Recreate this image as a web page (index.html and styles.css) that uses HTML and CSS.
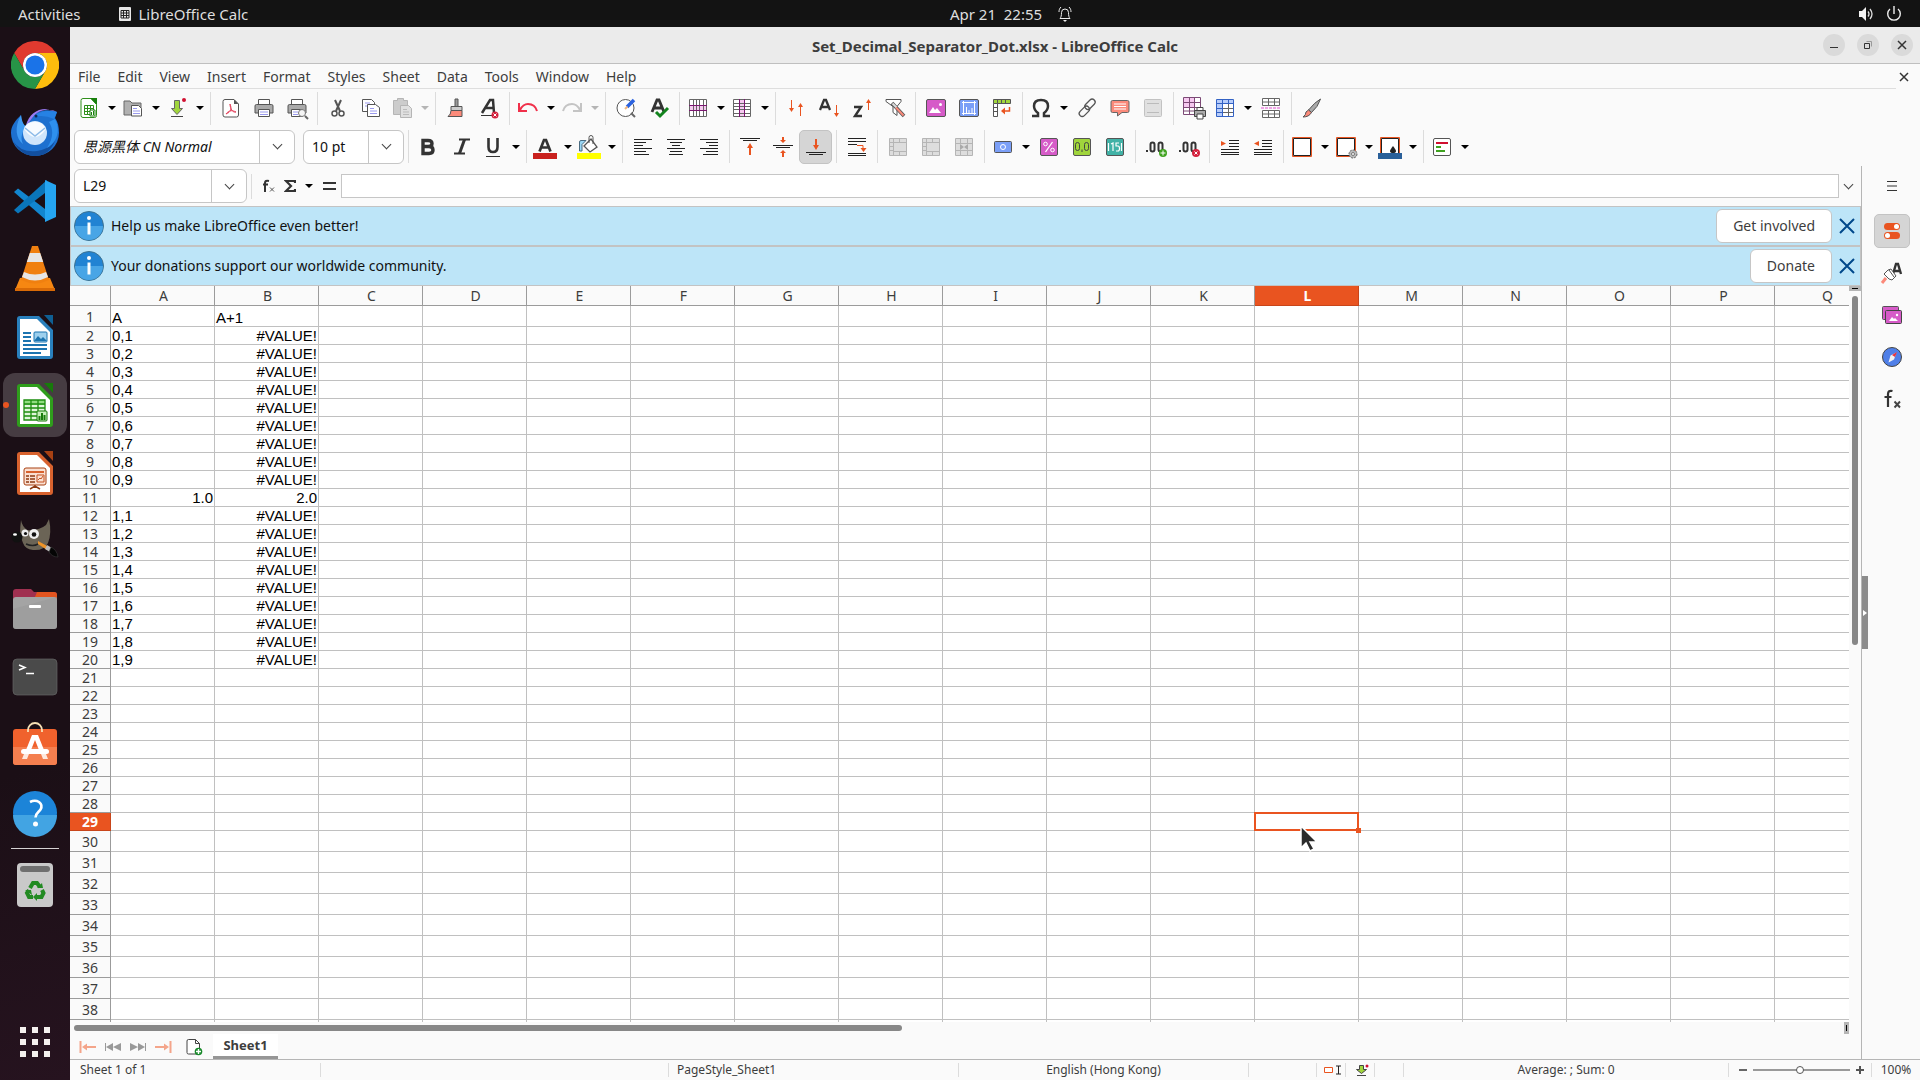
FILE: index.html
```html
<!DOCTYPE html>
<html lang="en">
<head>
  <meta charset="utf-8">
  <title>Set_Decimal_Separator_Dot.xlsx - LibreOffice Calc</title>
  <link rel="stylesheet" href="styles.css">
</head>
<body>
  <header class="topbar">
    <div class="topbar-left">
      <button type="button">Activities</button>
      <button type="button" class="app-menu">
        <svg width="12" height="14" viewBox="0 0 12 14"><rect width="12" height="14" rx="1" fill="#e8e8e8"/><path d="M2 3.500h8v7.500h-8zM2 6h8M2 8.500h8M4.500 3.500v7.500M7.500 3.500v7.500" fill="none" stroke="#222"/></svg>
        LibreOffice Calc
      </button>
    </div>
    <div class="clock">
      <span>Apr 21&nbsp; 22:55</span>
      <svg width="14" height="16" viewBox="0 0 14 16" fill="none" stroke="#eee"><path d="M2 12.500c1-1 1.500-3 1.500-6a3.500 3.500 0 0 1 7 0c0 3 .5 5 1.500 6z M1 6c0-2 .5-3.500 2-5M13 6c0-2-.5-3.500-2-5"/><path d="M5 14h4l-2 2z" fill="#eee" stroke="none"/></svg>
    </div>
    <div class="topbar-right">
      <svg width="16" height="16" viewBox="0 0 16 16"><path d="M1 5h3l4-4v14l-4-4H1z" fill="#f2f2f2"/><path d="M10 5.500q2 2.500 0 5M12 3q4 5 0 10" fill="none" stroke="#ddd" stroke-width="1.300"/></svg>
      <svg width="16" height="16" viewBox="0 0 16 16" fill="none" stroke="#eee" stroke-width="1.400"><path d="M4 3a6.300 6.300 0 1 0 8 0M8 0v8"/></svg>
    </div>
  </header>

  <div class="desktop">
    <nav class="dock" aria-label="Dock">
      <!-- Chrome -->
      <button type="button" aria-label="Google Chrome"><svg viewBox="0 0 48 48"><path d="M24 12h20.800A24 24 0 0 0 3.200 12l10.400 18A12 12 0 0 1 24 12z" fill="#e03a2f"/><path d="M44.800 12A24 24 0 0 1 24 48l10.400-18A12 12 0 0 0 24 12z" fill="#fdbd0d"/><path d="M3.200 12A24 24 0 0 0 24 48l10.400-18a12 12 0 0 1-20.800 0z" fill="#279447"/><circle cx="24" cy="24" r="12" fill="#fff"/><circle cx="24" cy="24" r="9.500" fill="#1a73e8"/></svg></button>
      <!-- Thunderbird -->
      <button type="button" aria-label="Thunderbird"><svg viewBox="0 0 48 48"><path d="M10 6c-6 6-10 11-10 18a24 23 0 0 0 48 0c0-6-1-11-4-15l2-6c-7-3-20-3-25 6-3 4-5 7-7 8-3-3-4-6-4-11z" fill="#1d70cf"/><path d="M2 32q8 12 24 10 12-2 18-10-6 15-20 15T2 32z" fill="#124f9f"/><path d="M10 6c1 6 2 9 5 12-4 5-6 11-3 17C5 30 3 18 10 6z" fill="#3f9cf3"/><path d="M46 3C39-1 28 0 22 8c-3 4-5 7-7 8 3-10 10-16 20-16z" fill="#9a7cf4"/><path d="M22 8c6-6 16-7 24-5l-3 7q-10-5-21-2z" fill="#2682e4"/><path d="M44 10c6 11 2 23-8 29 6-9 7-18 2-26z" fill="#2e90ee"/><circle cx="25" cy="7" r="1.500" fill="#10284f"/><circle cx="24" cy="24" r="12" fill="#cfe5fb"/><path d="M13 20q11 16 22 0a12 12 0 0 0-22 0z" fill="#f7fbff"/><path d="M14 19l10 8 10-8" fill="none" stroke="#8dbbe8" stroke-width="1.500"/></svg></button>
      <!-- VS Code -->
      <button type="button" aria-label="Visual Studio Code"><svg viewBox="0 0 48 48"><path d="M3 15l4-3.500 29 22v10.500z" fill="#1286cf"/><path d="M3 33l4 3.500 29-22V3z" fill="#0a76bb"/><path d="M34 3l11 5v32l-11 5V3z" fill="#25a5f1"/></svg></button>
      <!-- VLC -->
      <button type="button" aria-label="VLC"><svg viewBox="0 0 48 48"><path d="M9 33h30l5 12H4z" fill="#f68712"/><path d="M4 43h40v3H4z" fill="#d96a06"/><path d="M21 1h6l11 34q-14 7-28 0z" fill="#f08010"/><path d="M18.800 8h10.400l3 9H15.800zM13 27q11 5 22 0l2 5q-13 7-26 0z" fill="#e6e6e6"/></svg></button>
      <!-- Writer -->
      <button type="button" aria-label="LibreOffice Writer"><svg viewBox="0 0 48 48"><path d="M8 3h20l14 14v26q0 3-3 3H9q-3 0-3-3V6q0-3 3-3z" fill="#2980bd"/><path d="M33 2h9v10z" fill="#0f5f93"/><path d="M9 6h17l13 13v24H9z" fill="#fff"/><path d="M12 20h8M12 24h8M12 28h8M12 32h24M12 36h24M12 40h18" stroke="#1c74b0" stroke-width="2"/><rect x="23" y="19" width="13" height="10" rx="1" fill="#9dd0ee" stroke="#1c74b0"/><path d="M23 28l4-5 3 3 2-2 4 4z" fill="#1c74b0"/></svg></button>
      <!-- Calc -->
      <button type="button" class="active" aria-label="LibreOffice Calc"><svg viewBox="0 0 48 48"><path d="M8 3h20l14 14v26q0 3-3 3H9q-3 0-3-3V6q0-3 3-3z" fill="#2f9e1c"/><path d="M33 2h9v10z" fill="#177a0b"/><path d="M9 6h17l13 13v24H9z" fill="#fff"/><path d="M13 19h21v20H13z" fill="#e0f5db"/><path d="M13 19h21v5H13z" fill="#90dc80"/><path d="M13 19h21v20H13zM13 23h21M13 27h21M13 31h21M13 35h21M20 19v20M27 19v20" fill="none" stroke="#1d8d0f" stroke-width="1.300"/><rect x="26" y="30" width="10" height="10" rx="1" fill="#c5eeb9" stroke="#177a0b"/><path d="M28.500 39v-4M31 39v-7M33.500 39v-5" stroke="#177a0b" stroke-width="2"/></svg></button>
      <!-- Impress -->
      <button type="button" aria-label="LibreOffice Impress"><svg viewBox="0 0 48 48"><path d="M8 3h20l14 14v26q0 3-3 3H9q-3 0-3-3V6q0-3 3-3z" fill="#d8622e"/><path d="M33 2h9v10z" fill="#a84113"/><path d="M9 6h17l13 13v24H9z" fill="#fff"/><rect x="13" y="19" width="22" height="17" rx="2" fill="#fae0d2" stroke="#a84113"/><path d="M15 23h18" stroke="#d8622e" stroke-width="2"/><path d="M15 27h3M15 30h3M15 33h3M19 27h5M19 30h5M19 33h5" stroke="#8e3a12" stroke-width="1.500"/><path d="M26 26h7v7h-7zM27 31l2-2 1 1 2-3" fill="none" stroke="#c55322"/><path d="M24 36v3M19 40l5-3 5 3" fill="none" stroke="#8e3a12" stroke-width="1.500"/></svg></button>
      <!-- GIMP -->
      <button type="button" aria-label="GIMP"><svg viewBox="0 0 48 48"><path d="M10 3q1 6 6 10 12 1 19-5l3-6q3 14-1 24-4 8-15 7-8-1-10-7l-3-8q0-8 1-15z" fill="#6b6456"/><circle cx="6" cy="20" r="5.500" fill="#111"/><ellipse cx="4" cy="17.500" rx="2" ry="1.300" fill="#fff"/><circle cx="14" cy="16" r="3.500" fill="#eee"/><circle cx="23" cy="17" r="5" fill="#eee"/><circle cx="14.500" cy="16.500" r="1.600" fill="#111"/><circle cx="23" cy="17.500" r="2.300" fill="#111"/><path d="M15 27q7 3 12 0" fill="none" stroke="#222" stroke-width="1.500"/><path d="M27 24l11 6-2 3-9-6z" fill="#ef9428"/><path d="M36 28l5 3-2 4-5-3z" fill="#bbb"/><path d="M40 30q6 3 7 10-6 0-9-5z" fill="#050505" stroke="#444" stroke-width=".5"/></svg></button>
      <!-- Files -->
      <button type="button" aria-label="Files"><svg viewBox="0 0 48 48"><path d="M2 13V7q0-3 3-3h15l3 3h20q3 0 3 3v7H2z" fill="#a03050"/><path d="M26 7h17q3 0 3 3v7H22z" fill="#e2541f"/><rect x="2" y="12" width="44" height="32" rx="3" fill="#a4a4a4"/><path d="M2 24L46 12v29q0 3-3 3H5q-3 0-3-3z" fill="#989898" opacity=".5"/><rect x="18" y="20" width="12" height="3" rx="1" fill="#fff"/></svg></button>
      <!-- Terminal -->
      <button type="button" aria-label="Terminal"><svg viewBox="0 0 48 48"><rect x="2" y="6" width="44" height="36" rx="4" fill="#4a4a4a" stroke="#666" stroke-width=".7"/><path d="M8 12l6 2.500-6 2.500M15 20.500h8" fill="none" stroke="#fff" stroke-width="1.500"/></svg></button>
      <!-- Software -->
      <button type="button" aria-label="Ubuntu Software"><svg viewBox="0 0 48 48"><rect x="2" y="8" width="44" height="36" rx="3" fill="#f0622d"/><path d="M2 26h44v15q0 3-3 3H5q-3 0-3-3z" fill="#f47f4f"/><path d="M17 11V9a7 7 0 0 1 14 0v2" fill="none" stroke="#f7e0b5" stroke-width="1.800"/><path d="M21 14h6l6 15h-5l-4-10-4 10h-5z" fill="#fff"/><rect x="10" y="28" width="28" height="5" rx="2.500" fill="#fff"/><path d="M13 33h5l-2 5h-5zM30 33h5l2 5h-5z" fill="#fde9df"/></svg></button>
      <!-- Help -->
      <button type="button" aria-label="Help"><svg viewBox="0 0 48 48"><circle cx="24" cy="24" r="22" fill="#1c84d8"/><path d="M2 26a22 22 0 0 0 44 0z" fill="#42a4e3"/><path d="M19 13q5-2.500 9 0 4 3 1.500 7.500c-2 3-5 3.500-5 8" fill="none" stroke="#fff" stroke-width="2.600"/><circle cx="24.500" cy="35" r="2.500" fill="#fff"/></svg></button>
      <hr>
      <!-- Trash -->
      <button type="button" aria-label="Trash"><svg viewBox="0 0 48 48"><rect x="6" y="2" width="36" height="44" rx="4" fill="#c9c9c9"/><rect x="9" y="5" width="30" height="6" rx="3" fill="#6f6f6f"/><g fill="none" stroke="#228a22" stroke-width="4"><path d="M19 27l3-5h4l3 4M31 29l1.500 3-2 4H26M22 36h-4l-2-4 2-3"/></g><path d="M26 27h6l-1-5zM26 32v8l-4-4zM14 29h6l1 5z" fill="#228a22"/></svg></button>
      <button type="button" class="apps" aria-label="Show Applications"><svg viewBox="0 0 48 48" fill="#f4f1ee"><path d="M9 9h6v6H9zM21 9h6v6h-6zM33 9h6v6h-6zM9 21h6v6H9zM21 21h6v6h-6zM33 21h6v6h-6zM9 33h6v6H9zM21 33h6v6h-6zM33 33h6v6h-6z"/></svg></button>
    </nav>

    <main class="window">
      <div class="titlebar">
        <h1>Set_Decimal_Separator_Dot.xlsx - LibreOffice Calc</h1>
        <div class="window-buttons">
          <button type="button" aria-label="Minimize"><svg viewBox="0 0 22 22"><path d="M7 13.500h8"/></svg></button>
          <button type="button" aria-label="Restore"><svg viewBox="0 0 22 22"><path d="M7.500 9.500h5v5h-5z"/><path d="M9.500 7.500h5v5" stroke="#999"/></svg></button>
          <button type="button" aria-label="Close"><svg viewBox="0 0 22 22"><path d="M7 7l8 8M15 7l-8 8" stroke-width="1.500"/></svg></button>
        </div>
      </div>

      <div class="menubar">
        <nav>
          <a href="#">File</a><a href="#">Edit</a><a href="#">View</a><a href="#">Insert</a><a href="#">Format</a><a href="#">Styles</a><a href="#">Sheet</a><a href="#">Data</a><a href="#">Tools</a><a href="#">Window</a><a href="#">Help</a>
        </nav>
        <button type="button" aria-label="Close document"><svg width="10" height="10" viewBox="0 0 10 10"><path d="M1 1l8 8M9 1l-8 8" stroke="#333" stroke-width="1.500"/></svg></button>
      </div>

      <!-- Standard toolbar -->
      <div class="toolbar">
        <button type="button" class="tool split" aria-label="New"><svg viewBox="0 0 24 24"><path d="M6 2.500h8l5.500 6v11q0 2-2 2H6q-2 0-2-2v-15q0-2 2-2z" fill="#fff" stroke="#2f8f1b"/><path d="M13 2h7v7z" fill="#18800c"/><path d="M7.500 9.500h9v9h-9zM7.500 12.500h9M7.500 15.500h9M10.500 9.500v9M13.500 9.500v9" fill="none" stroke="#2f8f1b"/><path d="M13 14h5v6h-5z" fill="#fff" stroke="#18800c"/><path d="M14.500 19v-3M16.500 19v-4" stroke="#18800c"/></svg><i class="caret"></i></button>
        <button type="button" class="tool split" aria-label="Open"><svg viewBox="0 0 24 24"><path d="M3 19V5h6l2 2h9v12z" fill="#b0b0b0" stroke="#666"/><path d="M10.500 9.500h7l3 3v7.500h-10z" fill="#fff" stroke="#555"/><path d="M12 12.500h4M12 15h7M12 17.500h7" stroke="#9a9aee"/></svg><i class="caret"></i></button>
        <button type="button" class="tool split" aria-label="Save"><svg viewBox="0 0 24 24"><path d="M9.500 4.500h5v8h3L12 18.500l-5.500-6h3z" fill="#a0d53c" stroke="#666"/><path d="M6 20.500h12" stroke="#444"/><circle cx="19" cy="4" r="2" fill="#d01030"/></svg><i class="caret"></i></button>
        <span class="sep"></span>
        <button type="button" class="tool" aria-label="Export as PDF"><svg viewBox="0 0 24 24"><path d="M6 3.500h9l4.500 4.500v11q0 2-2 2H6q-2 0-2-2v-13.500q0-2 2-2z" fill="#fff" stroke="#555"/><path d="M15 3.500l4.500 4.500H15z" fill="#555"/><path d="M11 8c2 5 1 8-4 10 3-4 6-4 10-2-3 1-6-3-6-8z" fill="none" stroke="#e4425c"/></svg></button>
        <button type="button" class="tool" aria-label="Print"><svg viewBox="0 0 24 24"><path d="M6.500 3.500h11V9h-11z" fill="#fff" stroke="#555"/><path d="M4.500 8.500h15q1.500 0 1.500 1.500v7H3v-7q0-1.500 1.500-1.500z" fill="#aaa" stroke="#555"/><path d="M6.500 13.500h11v7h-11z" fill="#fff" stroke="#555"/><path d="M8 16h8M8 18.500h8" stroke="#9a9aee"/></svg></button>
        <button type="button" class="tool" aria-label="Print Preview"><svg viewBox="0 0 24 24"><path d="M6.500 3.500h11V9h-11z" fill="#fff" stroke="#555"/><path d="M4.500 8.500h15q1.500 0 1.500 1.500v7H3v-7q0-1.500 1.500-1.500z" fill="#aaa" stroke="#555"/><path d="M6.500 13.500h11v7h-11z" fill="#fff" stroke="#555"/><path d="M8 16h5M8 18.500h5" stroke="#9a9aee"/><circle cx="17" cy="17" r="3.500" fill="#f5f5f5" stroke="#777"/><path d="M20 20l3 3" stroke="#666" stroke-width="2"/></svg></button>
        <span class="sep"></span>
        <button type="button" class="tool" aria-label="Cut"><svg viewBox="0 0 24 24"><path d="M9 4l5 11M15 4l-5 11" stroke="#555" stroke-width="2"/><circle cx="8.500" cy="17.500" r="2.500" fill="#fff" stroke="#555" stroke-width="1.500"/><circle cx="15.500" cy="17.500" r="2.500" fill="#fff" stroke="#555" stroke-width="1.500"/></svg></button>
        <button type="button" class="tool" aria-label="Copy"><svg viewBox="0 0 24 24"><path d="M3.500 3.500h9l3 3v9h-12z" fill="#fff" stroke="#555"/><path d="M6 7h5M6 10h3" stroke="#9a9aee"/><path d="M8.500 8.500h8l4 3v9h-12z" fill="#fff" stroke="#555"/><path d="M11 12.500h4M11 15h7M11 17.500h7" stroke="#9a9aee"/></svg></button>
        <button type="button" class="tool split off" aria-label="Paste" disabled><svg viewBox="0 0 24 24"><path d="M3.500 4.500h4v-2h6v2h4v14h-14z" fill="#ccc" stroke="#b5b5b5"/><path d="M10.500 9.500h8l3 3v9h-11z" fill="#e0e0e0" stroke="#b5b5b5"/><path d="M13 13.500h4M13 16h6M13 18.500h6" stroke="#bbb"/></svg><i class="caret"></i></button>
        <span class="sep"></span>
        <button type="button" class="tool" aria-label="Clone Formatting"><svg viewBox="0 0 24 24"><path d="M11 3h3v8h-3z" fill="#999" stroke="#555"/><path d="M7 10.500h11v4H7z" fill="#ccc" stroke="#555"/><path d="M7 14.500h11v6H4q3-2 3-6z" fill="#fb8a7a" stroke="#555"/></svg></button>
        <button type="button" class="tool" aria-label="Clear Formatting"><svg viewBox="0 0 24 24"><path d="M5 17L13 4h3l1 13M8 12h8" fill="none" stroke="#333" stroke-width="2.500"/><path d="M4 19.500h11" stroke="#333"/><circle cx="18" cy="19" r="3.500" fill="#d4213d"/><path d="M16.500 17.500l3 3M19.500 17.500l-3 3" stroke="#fff"/></svg></button>
        <span class="sep"></span>
        <button type="button" class="tool split" aria-label="Undo"><svg viewBox="0 0 24 24"><path d="M21 15q-2-7-9-7-5 0-8 6" fill="none" stroke="#f0304a" stroke-width="2"/><path d="M3 7v8h8" fill="none" stroke="#f0304a" stroke-width="2"/></svg><i class="caret"></i></button>
        <button type="button" class="tool split off" aria-label="Redo" disabled><svg viewBox="0 0 24 24"><path d="M3 15q2-7 9-7 5 0 8 6M21 7v8h-8" fill="none" stroke="#c4c4c4" stroke-width="2"/></svg><i class="caret"></i></button>
        <span class="sep"></span>
        <button type="button" class="tool" aria-label="Find and Replace"><svg viewBox="0 0 24 24"><circle cx="11.500" cy="12" r="8.500" fill="#fff" stroke="#555"/><path d="M17 17l4 4" stroke="#666" stroke-width="2"/><path d="M13 11l7-7" stroke="#2b62e0" stroke-width="3.500"/><path d="M11 13l2.500-2.500" stroke="#f3b780" stroke-width="2"/></svg></button>
        <button type="button" class="tool" aria-label="Spelling"><svg viewBox="0 0 24 24"><path d="M5 16L10 4h2l5 12M7 12h8" fill="none" stroke="#333" stroke-width="2.800"/><path d="M9 16l4 4 8-8" fill="none" stroke="#12831d" stroke-width="3"/></svg></button>
        <span class="sep"></span>
        <button type="button" class="tool split" aria-label="Row"><svg viewBox="0 0 24 24"><path d="M3.500 3.500h17v17h-17z" fill="#fff"/><path d="M3 9h18v6H3z" fill="#f6c9f0"/><path d="M3.500 3.500h17v17h-17zM7.500 3v18M10.500 3v18M13.500 3v18M17.500 3v18" fill="none" stroke="#666"/><path d="M3 9.500h18M3 14.500h18" stroke="#7b1670"/></svg><i class="caret"></i></button>
        <button type="button" class="tool split" aria-label="Column"><svg viewBox="0 0 24 24"><path d="M3.500 3.500h17v17h-17z" fill="#fff"/><path d="M9 3h6v18H9z" fill="#f6c9f0"/><path d="M3.500 3.500h17v17h-17zM3 7.500h18M3 10.500h18M3 13.500h18M3 17.500h18" fill="none" stroke="#666"/><path d="M9.500 3v18M14.500 3v18" stroke="#7b1670"/></svg><i class="caret"></i></button>
        <span class="sep"></span>
        <button type="button" class="tool" aria-label="Sort"><svg viewBox="0 0 24 24"><path d="M7.500 4v8M16.500 11v9" stroke="#e95420"/><path d="M5 12h5l-2.500 4zM14 11h5l-2.500-4z" fill="#e95420"/></svg></button>
        <button type="button" class="tool" aria-label="Sort Ascending"><svg viewBox="0 0 24 24"><path d="M3 14L7 4h2L13 14M5 11h7" fill="none" stroke="#333" stroke-width="2.300"/><path d="M19.500 9v8" stroke="#e95420"/><path d="M17 17h5l-2.500 4z" fill="#e95420"/></svg></button>
        <button type="button" class="tool" aria-label="Sort Descending"><svg viewBox="0 0 24 24"><path d="M4 11h7l-6 9h7" fill="none" stroke="#333" stroke-width="2.400"/><path d="M18.500 6v8" stroke="#e95420"/><path d="M16 7h5l-2.500-4z" fill="#e95420"/></svg></button>
        <button type="button" class="tool" aria-label="AutoFilter"><svg viewBox="0 0 24 24"><path d="M3 3.500h15v2l-4 5v9l-4-3v-6l-7-5z" fill="#fff" stroke="#555"/><path d="M9 7l12 13" stroke="#555" stroke-width="3.500"/><path d="M9.500 7.500l4 4" stroke="#ddd" stroke-width="2"/><path d="M13 11.500l7.500 8" stroke="#fb8a7a" stroke-width="2"/></svg></button>
        <span class="sep"></span>
        <button type="button" class="tool" aria-label="Insert Image"><svg viewBox="0 0 24 24"><rect x="2.500" y="3.500" width="19" height="17" rx="1.500" fill="#d65bc8" stroke="#555"/><path d="M5 17l4-6 2 3 2-2 4 5z" fill="#fff"/><circle cx="16.500" cy="8.500" r="1.500" fill="#fff"/></svg></button>
        <button type="button" class="tool" aria-label="Insert Chart"><svg viewBox="0 0 24 24"><rect x="2.500" y="3.500" width="19" height="17" rx="1.500" fill="#7b9ff7" stroke="#555"/><path d="M5 6.500h14M5 17.500h14M6.500 5v14M17.500 5v14M9.500 17v-6M12 17v-3M15 17v-5" fill="none" stroke="#fff"/></svg></button>
        <button type="button" class="tool" aria-label="Pivot Table"><svg viewBox="0 0 24 24"><path d="M3.500 3.500h17v4h-17z" fill="#a0d53c" stroke="#555"/><path d="M7.500 3v5M11.500 3v5M15.500 3v5" stroke="#555"/><path d="M3.500 7.500h4v13h-4zM3 11.500h5M3 15.500h5" fill="#fff" stroke="#555"/><path d="M19.500 11v4H13" fill="none" stroke="#e95420" stroke-width="1.500"/><path d="M15 11.500v7L11 15z" fill="#e95420"/></svg></button>
        <span class="sep"></span>
        <button type="button" class="tool split" aria-label="Special Character"><svg viewBox="0 0 24 24"><path d="M3 20h6v-3q-4-3-4-7 0-6 7-6t7 6q0 4-4 7v3h6" fill="none" stroke="#333" stroke-width="2.500"/></svg><i class="caret"></i></button>
        <button type="button" class="tool" aria-label="Hyperlink"><svg viewBox="0 0 24 24" fill="none" stroke="#555" stroke-width="1.300"><rect x="9.500" y="5.500" width="12" height="6" rx="3" transform="rotate(-45 15 9)"/><rect x="3" y="12.500" width="12" height="6" rx="3" transform="rotate(-45 9 15)"/></svg></button>
        <button type="button" class="tool" aria-label="Comment"><svg viewBox="0 0 24 24"><path d="M4.500 4.500h15q1.500 0 1.500 1.500v9q0 1.500-1.500 1.500H14L9.500 20v-3.500h-5Q3 16.500 3 15V6q0-1.500 1.500-1.500z" fill="#fb8a7a" stroke="#666"/><path d="M6 8h12M6 10.500h12M6 13h12" stroke="#fff"/></svg></button>
        <button type="button" class="tool off" aria-label="Headers and Footers" disabled><svg viewBox="0 0 24 24"><rect x="3.500" y="3.500" width="17" height="17" rx="1" fill="#e0e0e0" stroke="#c2c2c2"/><path d="M6 7.500h12M6 16.500h12" stroke="#bbb"/></svg></button>
        <span class="sep"></span>
        <button type="button" class="tool" aria-label="Define Print Area"><svg viewBox="0 0 24 24"><path d="M1.500 1.500h17v17h-17z" fill="#fff"/><path d="M1.500 1.500h11v10h-11z" fill="#f6c9f0"/><path d="M1.500 1.500h17v17h-17zM1.500 6.500h17M1.500 11.500h17M1.500 15h17M7.500 1v17M12.500 1v17" fill="none" stroke="#7c4a76"/><path d="M12.500 14.500h11v6h-11z" fill="#aaa" stroke="#444"/><path d="M15 11.500h6v3h-6zM15 18h6v5h-6z" fill="#fff" stroke="#444"/></svg></button>
        <button type="button" class="tool split" aria-label="Freeze Rows and Columns"><svg viewBox="0 0 24 24"><path d="M3.500 3.500h17v17h-17z" fill="#fff"/><path d="M3.500 3.500h17v4h-17zM3.500 7.500h6v13h-6z" fill="#b7cdfb"/><path d="M9 12.500h12M9 16.500h12M15.500 8v13" stroke="#666"/><path d="M3.500 3.500h17v17h-17zM3 7.500h18M9.500 3v18M15.500 3v5M3 12.500h6M3 16.500h6" fill="none" stroke="#3362c4"/></svg><i class="caret"></i></button>
        <button type="button" class="tool" aria-label="Split Window"><svg viewBox="0 0 24 24"><path d="M3.500 2.500h17v7h-17zM3.500 14.500h17v7h-17zM3 6h18M3 18h18M9.500 3v7M15.500 3v7M9.500 14v8M15.500 14v8" fill="#fff" stroke="#666"/><path d="M2 12h20" stroke="#e54fd3" stroke-dasharray="3 1"/></svg></button>
        <span class="sep"></span>
        <button type="button" class="tool" aria-label="Show Draw Functions"><svg viewBox="0 0 24 24"><path d="M20.500 3Q15 6 8.500 14l3 2.500Q18 11 20.500 3z" fill="#aaa" stroke="#555"/><path d="M8.500 14l3 2.500Q9 21 3 21q3-2 3-5z" fill="#fb8a7a" stroke="#555"/></svg></button>
      </div>

      <!-- Formatting toolbar -->
      <div class="toolbar formatting">
        <div class="combo font-name">
          <input type="text" value="思源黑体 CN Normal" aria-label="Font name">
          <button type="button" aria-label="Font list"><i class="chevron"></i></button>
        </div>
        <div class="combo font-size">
          <input type="text" value="10 pt" aria-label="Font size">
          <button type="button" aria-label="Size list"><i class="chevron"></i></button>
        </div>
        <span class="sep"></span>
        <button type="button" class="tool" aria-label="Bold"><svg viewBox="0 0 24 24"><path d="M6 5.500h5q4 0 4 3t-4 3H6zM6 11.500h6q4 0 4 3.500t-4 3.500H6z" fill="none" stroke="#333" stroke-width="3.400"/></svg></button>
        <button type="button" class="tool" aria-label="Italic"><svg viewBox="0 0 24 24"><path d="M9 4.500h11M4 18.500h11" stroke="#333" stroke-width="1.800"/><path d="M14.500 4.500l-5 14" stroke="#333" stroke-width="3"/></svg></button>
        <button type="button" class="tool split" aria-label="Underline"><svg viewBox="0 0 24 24"><path d="M7.500 3v9q0 5 4.500 5t4.500-5V3" fill="none" stroke="#333" stroke-width="2.600"/><path d="M5 21.500h14" stroke="#333"/></svg><i class="caret"></i></button>
        <span class="sep"></span>
        <button type="button" class="tool split" aria-label="Font Color"><svg viewBox="0 0 24 24"><path d="M6.500 16.500L11 5h2l4.500 11.500M8 12.500h8" fill="none" stroke="#333" stroke-width="2.700"/><path d="M0 18h24v6H0z" fill="#c9211e"/></svg><i class="caret"></i></button>
        <button type="button" class="tool split" aria-label="Background Color"><svg viewBox="0 0 24 24"><path d="M2.500 16V7q0-1.500 1.500-1.500h5l-4 4V16z" fill="#9ad7f5" stroke="#4a6b80"/><path d="M7 11l7-7 6 8-7 5z" fill="#fff" stroke="#555" stroke-width="1.300"/><path d="M12 8V2.500q0-2 2-2t2 2V9" fill="none" stroke="#555"/><path d="M0 18h24v6H0z" fill="#ff0"/></svg><i class="caret"></i></button>
        <span class="sep"></span>
        <button type="button" class="tool" aria-label="Align Left"><svg viewBox="0 0 24 24"><path d="M3 4.500h18M3 7.500h12M3 10.500h9M3 13.500h18M3 16.500h12M3 19.500h15" stroke="#222"/></svg></button>
        <button type="button" class="tool" aria-label="Center Horizontally"><svg viewBox="0 0 24 24"><path d="M3 4.500h18M6 7.500h12M8 10.500h8M3 13.500h18M6 16.500h12M5 19.500h14" stroke="#222"/></svg></button>
        <button type="button" class="tool" aria-label="Align Right"><svg viewBox="0 0 24 24"><path d="M3 4.500h18M9 7.500h12M12 10.500h9M3 13.500h18M9 16.500h12M6 19.500h15" stroke="#222"/></svg></button>
        <span class="sep"></span>
        <button type="button" class="tool" aria-label="Align Top"><svg viewBox="0 0 24 24"><path d="M2 3.500h20M5 5.500h14" stroke="#222"/><path d="M12 12v8" stroke="#e95420" stroke-width="2"/><path d="M9 13h6l-3-5z" fill="#e95420"/></svg></button>
        <button type="button" class="tool" aria-label="Center Vertically"><svg viewBox="0 0 24 24"><path d="M2 10.500h20M5 12.500h14" stroke="#222"/><path d="M12 2v3M12 18v4" stroke="#e95420" stroke-width="2"/><path d="M9 5h6l-3 3zM9 18h6l-3-3z" fill="#e95420"/></svg></button>
        <button type="button" class="tool pressed" aria-label="Align Bottom" aria-pressed="true"><svg viewBox="0 0 24 24"><path d="M2 17.500h20M5 19.500h14" stroke="#222"/><path d="M12 4v7" stroke="#e95420" stroke-width="2"/><path d="M9 10h6l-3 5z" fill="#e95420"/></svg></button>
        <span class="sep"></span>
        <button type="button" class="tool" aria-label="Wrap Text"><svg viewBox="0 0 24 24"><path d="M3 3.500h18M3 6.500h18M3 9.500h9M3 18.500h18M3 20.500h18" stroke="#222"/><path d="M12 10.500h6v3" fill="none" stroke="#e95420"/><path d="M15.500 13h6L18.500 17z" fill="#e95420"/></svg></button>
        <span class="sep"></span>
        <button type="button" class="tool off" aria-label="Merge and Center" disabled><svg viewBox="0 0 24 24"><path d="M3.500 3.500h17v17h-17zM3 7.500h18M7.500 3v18M13.500 3v4M3 11.500h4M3 15.500h4M8 16.500h13M13.500 17v4" fill="#ddd" stroke="#b5b5b5"/></svg></button>
        <button type="button" class="tool off" aria-label="Merge Cells" disabled><svg viewBox="0 0 24 24"><path d="M3.500 3.500h17v17h-17zM3 7.500h18M7.500 3v18M13.500 3v4M3 11.500h4M3 15.500h4M8 16.500h13M13.500 17v4" fill="#ddd" stroke="#b5b5b5"/></svg></button>
        <button type="button" class="tool off" aria-label="Unmerge Cells" disabled><svg viewBox="0 0 24 24"><path d="M3.500 3.500h17v17h-17zM3 8.500h18M3 15.500h18M8.500 3v5M15.500 3v5M8.500 16v5M15.500 16v5" fill="#ddd" stroke="#b5b5b5"/><path d="M8 9l4 3-4 3zM16 9l-4 3 4 3z" fill="#aaa"/></svg></button>
        <span class="sep"></span>
        <button type="button" class="tool split" aria-label="Format as Currency"><svg viewBox="0 0 24 24"><rect x="3.500" y="6.500" width="17" height="11" rx="1" fill="#7b9ff7" stroke="#555"/><circle cx="12" cy="12" r="2.500" fill="none" stroke="#fff"/></svg><i class="caret"></i></button>
        <button type="button" class="tool" aria-label="Format as Percent"><svg viewBox="0 0 24 24"><rect x="3.500" y="3.500" width="17" height="17" rx="1.500" fill="#d65bc8" stroke="#555"/><path d="M15.500 7l-7 10" stroke="#fff" stroke-width="1.300"/><circle cx="8.500" cy="9" r="1.800" fill="none" stroke="#fff"/><circle cx="15.500" cy="15" r="1.800" fill="none" stroke="#fff"/></svg></button>
        <button type="button" class="tool" aria-label="Format as Number"><svg viewBox="0 0 24 24"><rect x="3.500" y="3.500" width="17" height="17" rx="1.500" fill="#a0d53c" stroke="#555"/><rect x="5.500" y="7.500" width="4" height="8" rx="2" fill="none" stroke="#444"/><rect x="14.500" y="7.500" width="4" height="8" rx="2" fill="none" stroke="#444"/><path d="M12 14.500v2.500" stroke="#444"/></svg></button>
        <button type="button" class="tool" aria-label="Format as Date"><svg viewBox="0 0 24 24"><rect x="3.500" y="3.500" width="17" height="17" rx="1.500" fill="#41b2a6" stroke="#555"/><path d="M5.500 8v8M18.500 8v8M8 9l2-1v8M16 8h-3v3h2q1.500 0 1.500 2.500T15 16h-2" fill="none" stroke="#fff" stroke-width="1.200"/></svg></button>
        <span class="sep"></span>
        <button type="button" class="tool" aria-label="Add Decimal Place"><svg viewBox="0 0 24 24"><path d="M2 15h2v2H2z" fill="#333"/><rect x="6.500" y="7.500" width="4" height="9" rx="2" fill="none" stroke="#333" stroke-width="2"/><rect x="14.500" y="7.500" width="4" height="9" rx="2" fill="none" stroke="#333" stroke-width="2"/><circle cx="19" cy="18" r="4" fill="#3fa21f"/><path d="M16.500 18h5M19 15.500v5" stroke="#fff"/></svg></button>
        <button type="button" class="tool" aria-label="Delete Decimal Place"><svg viewBox="0 0 24 24"><path d="M2 15h2v2H2z" fill="#333"/><rect x="6.500" y="7.500" width="4" height="9" rx="2" fill="none" stroke="#333" stroke-width="2"/><rect x="14.500" y="7.500" width="4" height="9" rx="2" fill="none" stroke="#333" stroke-width="2"/><circle cx="19" cy="18" r="4" fill="#d4213d"/><path d="M17.500 16.500l3 3M20.500 16.500l-3 3" stroke="#fff"/></svg></button>
        <span class="sep"></span>
        <button type="button" class="tool" aria-label="Increase Indent"><svg viewBox="0 0 24 24"><path d="M11 5.500h10M11 8.500h10M11 11.500h10M3 14.500h18M3 17.500h18M3 19.500h18" stroke="#222"/><path d="M3 6l5 2.500L3 11z" fill="#e95420"/></svg></button>
        <button type="button" class="tool" aria-label="Decrease Indent"><svg viewBox="0 0 24 24"><path d="M11 5.500h10M11 8.500h10M11 11.500h10M3 14.500h18M3 17.500h18M3 19.500h18" stroke="#222"/><path d="M8 6L3 8.500 8 11z" fill="#e95420"/></svg></button>
        <span class="sep"></span>
        <button type="button" class="tool split" aria-label="Borders"><svg viewBox="0 0 24 24"><path d="M2.500 2.500h19v19h-19z" fill="#fff" stroke="#e95420"/><path d="M3.500 3.500h17v17h-17z" fill="none" stroke="#222"/></svg><i class="caret"></i></button>
        <button type="button" class="tool split" aria-label="Border Style"><svg viewBox="0 0 24 24"><path d="M2.500 2.500h19v19h-19z" fill="#fff" stroke="#e95420"/><path d="M3.500 3.500h17v17h-17z" fill="none" stroke="#222"/><circle cx="19" cy="19" r="4" fill="#bbb" stroke="#666" stroke-dasharray="2 1"/><circle cx="19" cy="19" r="1.500" fill="#fff" stroke="#777"/></svg><i class="caret"></i></button>
        <button type="button" class="tool split" aria-label="Border Color"><svg viewBox="0 0 24 24"><path d="M2.500 2.500h19v17h-19z" fill="#fff" stroke="#e95420"/><path d="M3.500 19V3.500h17V19" fill="none" stroke="#222"/><path d="M15 11q3 4 3 5 0 2-3 2t-3-2q0-1 3-5z" fill="#222"/><path d="M0 18h24v6H0z" fill="#2a6099"/></svg><i class="caret"></i></button>
        <span class="sep"></span>
        <button type="button" class="tool split" aria-label="Conditional Formatting"><svg viewBox="0 0 24 24"><rect x="3.500" y="3.500" width="17" height="17" rx="1.500" fill="#fff" stroke="#555"/><path d="M6 8h12" stroke="#d01030" stroke-width="2"/><path d="M6 12h5M6 16h9" stroke="#3fa21f" stroke-width="2"/></svg><i class="caret"></i></button>
      </div>

      <div class="workspace">
        <section class="document">
          <div class="formula-bar">
            <div class="combo name-box">
              <input type="text" value="L29" aria-label="Name Box">
              <button type="button" aria-label="Named ranges"><i class="chevron"></i></button>
            </div>
            <span class="sep"></span>
            <button type="button" class="fx" aria-label="Function Wizard"><svg width="14" height="14" viewBox="0 0 14 14"><path d="M3 13V4q0-3 4-2M1 5.500h5" fill="none" stroke="#333" stroke-width="2"/><path d="M8 8.500l4 4M12 8.500l-4 4" stroke="#555"/></svg></button>
            <button type="button" class="sigma" aria-label="Select Function"><svg width="12" height="14" viewBox="0 0 12 14"><path d="M11 4V2H2l5 5-5 5h9v-2" fill="none" stroke="#333" stroke-width="2.200"/></svg><i class="caret"></i></button>
            <button type="button" class="equals" aria-label="Formula"><svg width="14" height="8" viewBox="0 0 14 8"><path d="M0 1h13M0 7h13" stroke="#333" stroke-width="2"/></svg></button>
            <input type="text" class="formula-input" aria-label="Input line">
            <button type="button" class="expand" aria-label="Expand Formula Bar"><i class="chevron"></i></button>
          </div>

          <div class="infobar">
            <svg width="30" height="30" viewBox="0 0 30 30"><circle cx="15" cy="15" r="14.500" fill="#2183d3" stroke="#3f7391"/><path d="M1 15a14 14 0 0 0 28 0z" fill="#48a5e6"/><circle cx="15" cy="7" r="2" fill="#fff"/><path d="M15 11.500v12" stroke="#fff" stroke-width="3"/></svg>
            <p>Help us make LibreOffice even better!</p>
            <button type="button" class="action">Get involved</button>
            <button type="button" class="dismiss" aria-label="Close"><svg width="18" height="18" viewBox="0 0 18 18"><path d="M2 2l14 14M16 2L2 16" stroke="#00488b" stroke-width="2"/></svg></button>
          </div>
          <div class="infobar">
            <svg width="30" height="30" viewBox="0 0 30 30"><circle cx="15" cy="15" r="14.500" fill="#2183d3" stroke="#3f7391"/><path d="M1 15a14 14 0 0 0 28 0z" fill="#48a5e6"/><circle cx="15" cy="7" r="2" fill="#fff"/><path d="M15 11.500v12" stroke="#fff" stroke-width="3"/></svg>
            <p>Your donations support our worldwide community.</p>
            <button type="button" class="action">Donate</button>
            <button type="button" class="dismiss" aria-label="Close"><svg width="18" height="18" viewBox="0 0 18 18"><path d="M2 2l14 14M16 2L2 16" stroke="#00488b" stroke-width="2"/></svg></button>
          </div>

          <div class="sheet">
            <div class="grid-view">
              <table id="grid"></table>
            </div>
            <div class="vscroll"><span class="split-grip"></span><span class="thumb"></span></div>
          </div>
          <div class="hscroll"><span class="thumb"></span><span class="split-grip"></span></div>

          <div class="tabs">
            <button type="button" aria-label="First sheet"><svg viewBox="0 0 18 14"><path d="M1.500 1v12" stroke="#f4a58a" stroke-width="2"/><path d="M5 7h12" stroke="#f4a58a" stroke-width="2"/><path d="M3 7l5-3.500v7z" fill="#f4a58a"/></svg></button>
            <button type="button" aria-label="Previous sheet"><svg viewBox="0 0 18 14"><path d="M1.500 3v8" stroke="#999"/><path d="M9 3v8L2 7zM17 3v8L9 7z" fill="#999"/></svg></button>
            <button type="button" aria-label="Next sheet"><svg viewBox="0 0 18 14"><path d="M16.500 3v8" stroke="#999"/><path d="M1 3v8l8-4zM9 3v8l7-4z" fill="#999"/></svg></button>
            <button type="button" aria-label="Last sheet"><svg viewBox="0 0 18 14"><path d="M16.500 1v12" stroke="#f4a58a" stroke-width="2"/><path d="M1 7h12" stroke="#f4a58a" stroke-width="2"/><path d="M15 7l-5-3.500v7z" fill="#f4a58a"/></svg></button>
            <button type="button" class="add" aria-label="Add sheet"><svg viewBox="0 0 18 18"><path d="M3.500 1.500h7l4 4v10.500h-11q-1.500 0-1.500-1.500V3q0-1.500 1.500-1.500z" fill="#fff" stroke="#444"/><path d="M10.500 1.500v4h4" fill="none" stroke="#444"/><circle cx="13.500" cy="13.500" r="3.800" fill="#188a2a"/><path d="M11 13.500h5M13.500 11v5" stroke="#fff" stroke-width="1.400"/></svg></button>
            <button type="button" class="tab">Sheet1</button>
          </div>
        </section>

        <div class="splitter"><button type="button" aria-label="Hide sidebar"></button></div>

        <aside class="sidebar">
          <button type="button" aria-label="Sidebar Settings"><svg viewBox="0 0 24 24"><path d="M7 7.500h10M7 12h10M7 16.500h10" stroke="#333"/></svg></button>
          <button type="button" class="pressed" aria-label="Properties"><svg viewBox="0 0 24 24"><rect x="4" y="4" width="16" height="7" rx="3.500" fill="#e95420"/><rect x="4" y="13" width="16" height="7" rx="3.500" fill="#e95420"/><circle cx="16.500" cy="7.500" r="2.500" fill="#fff"/><circle cx="7.500" cy="16.500" r="2.500" fill="#fff"/></svg></button>
          <button type="button" aria-label="Styles"><svg viewBox="0 0 24 24"><path d="M13 13l3-10h2l3 10M14 10h6" fill="none" stroke="#333" stroke-width="2.400"/><path d="M2 22l4-5" stroke="#fb8a7a" stroke-width="3"/><path d="M4 13l4-4 3-1 5 7-4 4-3-1-2-2z" fill="#fff" stroke="#555"/><path d="M9 9l5 7" stroke="#555"/></svg></button>
          <button type="button" aria-label="Gallery"><svg viewBox="0 0 24 24"><rect x="2.500" y="3.500" width="16" height="13" rx="1" fill="#d65bc8" stroke="#555"/><rect x="5.500" y="7.500" width="16" height="13" rx="1" fill="#d65bc8" stroke="#444"/><path d="M9 18l3-4 2 2 1-1 3 3z" fill="#fff"/><circle cx="17" cy="12" r="1.200" fill="#fff"/></svg></button>
          <button type="button" aria-label="Navigator"><svg viewBox="0 0 24 24"><circle cx="12" cy="12" r="9.500" fill="#4f7fe8" stroke="#444"/><path d="M16.500 7.500l-2.500 7-5.500 3 2-7z" fill="#f2f2f2"/><path d="M17 7l-5 3 3 2z" fill="#e8323c"/></svg></button>
          <button type="button" aria-label="Functions"><svg viewBox="0 0 24 24"><path d="M8 20V7q0-4 4.500-3M4.500 10h7" fill="none" stroke="#333" stroke-width="2.200"/><path d="M14.500 14.500l5.500 6M20 14.500l-5.500 6" stroke="#444" stroke-width="1.900"/></svg></button>
        </aside>
      </div>

      <footer class="statusbar">
        <span class="cell sheets">Sheet 1 of 1</span>
        <span class="cell find"></span>
        <span class="cell page-style">PageStyle_Sheet1</span>
        <span class="cell language">English (Hong Kong)</span>
        <span class="cell insert-mode"></span>
        <span class="cell small"><svg width="18" height="10" viewBox="0 0 18 10"><path d="M.5 2.500h8v5h-8z" fill="#fff" stroke="#e95420"/><path d="M12 1h5M12 9h5M14.500 1v8" stroke="#222"/></svg></span>
        <span class="cell small"><svg width="14" height="12" viewBox="0 0 14 12"><path d="M4.500 1.500h4v4h3L6.500 9.500 1.500 5.500h3z" fill="#a0d53c" stroke="#444"/><path d="M2 11.500h9" stroke="#444"/><circle cx="12" cy="2" r="1.500" fill="#d01030"/></svg></span>
        <span class="cell small"></span>
        <span class="cell average">Average: ; Sum: 0</span>
        <span class="cell zoom">
          <button type="button" aria-label="Zoom out"><svg width="8" height="8" viewBox="0 0 8 8"><path d="M0 4h8" stroke="#666" stroke-width="2"/></svg></button>
          <input type="range" min="0" max="100" value="49" aria-label="Zoom">
          <button type="button" aria-label="Zoom in"><svg width="8" height="8" viewBox="0 0 8 8"><path d="M0 4h8M4 0v8" stroke="#555" stroke-width="2"/></svg></button>
        </span>
        <span class="cell percent">100%</span>
      </footer>
    </main>
  </div>

  <script>
    const columns = "ABCDEFGHIJKLMNOPQ".split("");
    const selected = { column: "L", row: 29 };
    const lastRow = 38;
    const data = { 1: ["A", "A+1"], 11: ["1.0", "2.0"] };

    // text values with a comma give an error in the second column
    for (let row = 2; row <= 20; row++) {
      if (row !== 11) {
        data[row] = [Math.floor((row - 1) / 10) + "," + ((row - 1) % 10), "#VALUE!"];
      }
    }

    const cursor = '<svg class="cursor" width="18" height="28" viewBox="0 0 18 28">' +
      '<path d="M1 1v22l5-5 4 8 4-2-4-7h7z" fill="#2b2b2b" stroke="#fff" stroke-width="1.500"/></svg>';

    const table = document.getElementById("grid");
    let html = "<thead><tr><th></th>";
    for (const name of columns) {
      html += '<th scope="col"' + (name === selected.column ? ' class="current"' : "") + ">" + name + "</th>";
    }
    html += "</tr></thead><tbody>";

    // one empty row after the last keeps the grid lines running to the edge
    for (let row = 1; row <= lastRow + 1; row++) {
      const tall = row === 1 || row >= 30;
      html += tall ? '<tr class="tall">' : "<tr>";
      html += '<th scope="row"' + (row === selected.row ? ' class="current"' : "") + ">" + (row > lastRow ? "" : row) + "</th>";
      columns.forEach(function (name, i) {
        const value = data[row] && data[row][i] ? data[row][i] : "";
        if (name === selected.column && row === selected.row) {
          html += '<td class="current">' + cursor + "</td>";
        } else if (/^(#|\d+\.)/.test(value)) {
          html += '<td class="right">' + value + "</td>";
        } else {
          html += "<td>" + value + "</td>";
        }
      });
      html += "</tr>";
    }
    table.innerHTML = html + "</tbody>";
  </script>
</body>
</html>
```
FILE: styles.css
```css
* {
  box-sizing: border-box;
}
body {
  margin: 0;
  height: 100vh;
  display: flex;
  flex-direction: column;
  overflow: hidden;
  font-family: "Noto Sans", "Noto Sans CJK SC", sans-serif;
  font-size: 14px;
  line-height: 20px;
  color: #3d3d3d;
  background: #fafafa;
}
button, input {
  font: inherit;
  color: inherit;
  margin: 0;
  padding: 0;
  border: none;
  background: none;
}
svg {
  display: block;
  flex: none;
}

/* desktop top bar */
.topbar {
  display: grid;
  grid-template-columns: 1fr auto 1fr;
  align-items: center;
  height: 27px;
  flex: none;
  padding: 0 18px;
  background: #131313;
  color: #dedede;
  font-size: 15px;
}
.topbar-left {
  display: flex;
  gap: 38px;
}
.app-menu {
  display: flex;
  align-items: center;
  gap: 8px;
}
.clock {
  display: flex;
  align-items: center;
  gap: 16px;
  padding-left: 102px; /* keeps the clock right of the centre */
}
.topbar-right {
  display: flex;
  gap: 12px;
  justify-content: flex-end;
}
.desktop {
  flex: 1;
  min-height: 0;
  display: flex;
}

/* dock */
.dock {
  width: 70px;
  flex: none;
  display: flex;
  flex-direction: column;
  align-items: center;
  gap: 4px;
  padding: 6px 0;
  background: linear-gradient(165deg, #1b0f16 70%, #26131f);
}
.dock button {
  position: relative;
  width: 64px;
  height: 64px;
  padding: 8px;
  border-radius: 12px;
}
.dock svg {
  width: 48px;
  height: 48px;
}
.dock .active {
  background: #463c42;
}
.dock .active::before {
  content: "";
  position: absolute;
  left: 0;
  top: 29px;
  width: 6px;
  height: 6px;
  border-radius: 50%;
  background: #e95420;
}
.dock hr {
  width: 48px;
  height: 1px;
  margin: -1px 0 0;
  border: none;
  background: #d5d2d3;
}
.dock .apps {
  margin-top: auto;
}

/* window frame */
.window {
  flex: 1;
  min-width: 0;
  display: flex;
  flex-direction: column;
  background: #fafafa;
}
.titlebar {
  position: relative;
  display: flex;
  align-items: center;
  height: 37px;
  flex: none;
  background: #ebebeb;
  border-bottom: 1px solid #bfbfbf;
}
.titlebar h1 {
  flex: 1;
  margin: 0;
  padding-top: 1px;
  text-align: center;
  font-size: 15px;
}
.window-buttons {
  position: absolute;
  right: 7px;
  display: flex;
  gap: 12px;
}
.window-buttons button {
  border-radius: 50%;
  background: #dadada;
}
.window-buttons svg {
  width: 22px;
  height: 22px;
  fill: none;
  stroke: #333;
}
.menubar {
  display: flex;
  height: 25px;
  flex: none;
}
.menubar nav {
  flex: 1;
  display: flex;
  align-items: center;
  gap: 17px;
  padding: 1px 0 0 8px;
  border-bottom: 1px solid #dedede;
}
.menubar a {
  color: #3d3d3d;
  text-decoration: none;
}
.menubar button {
  width: 24px;
  padding-left: 3px;
}

/* toolbars */
.toolbar {
  display: flex;
  align-items: center;
  height: 38px;
  flex: none;
  padding-left: 4px;
}
.toolbar.formatting {
  height: 39px;
}
.tool {
  display: flex;
  align-items: center;
  justify-content: center;
  width: 33px;
  height: 34px;
  flex: none;
}
.tool svg, .sidebar svg {
  width: 24px;
  height: 24px;
}
.tool.split {
  width: 44px;
  justify-content: flex-start;
  padding-left: 3px;
  gap: 7px;
}
.pressed {
  background: #d5d5d5;
  border: 1px solid #c3c3c3;
  border-radius: 5px;
}
.caret {
  border: 4px solid transparent;
  border-top-color: #000;
  border-bottom: none;
}
.off .caret {
  border-top-color: #b5b5b5;
}
.sep {
  width: 1px;
  height: 33px;
  flex: none;
  margin: 0 3px 0 4px;
  background: #dcdcdc;
}
.combo {
  display: flex;
  height: 34px;
  flex: none;
  background: #fff;
  border: 1px solid #c6c6c6;
  border-radius: 6px;
  color: #111;
}
.combo input {
  flex: 1;
  min-width: 0;
  padding-left: 8px;
}
.combo button {
  display: flex;
  align-items: center;
  justify-content: center;
  width: 35px;
  border-left: 1px solid #c6c6c6;
}
.chevron {
  width: 7px;
  height: 7px;
  margin-top: -4px;
  border: solid #444;
  border-width: 0 1px 1px 0;
  transform: rotate(45deg);
}
.font-name {
  width: 221px;
  margin-right: 8px;
}
.font-name input {
  font-style: italic;
}
.font-size {
  width: 101px;
}

/* formula bar */
.workspace {
  flex: 1;
  min-height: 0;
  display: flex;
}
.document {
  flex: 1;
  min-width: 0;
  display: flex;
  flex-direction: column;
}
.formula-bar {
  display: flex;
  align-items: center;
  height: 40px;
  flex: none;
  padding-left: 4px;
}
.formula-bar .sep {
  height: 25px;
}
.name-box {
  width: 173px;
}
.fx {
  width: 29px;
  padding-left: 7px;
}
.sigma {
  display: flex;
  align-items: center;
  gap: 9px;
  width: 39px;
}
.equals {
  width: 18px;
}
.formula-input {
  flex: 1;
  height: 24px;
  background: #fff;
  border: 1px solid #c6c6c6;
}
.expand {
  display: flex;
  justify-content: center;
  width: 22px;
  padding-right: 4px;
}

/* info bars */
.infobar {
  display: flex;
  align-items: center;
  height: 40px;
  flex: none;
  padding: 0 4px 0 3px;
  background: #bde5f8;
  border: 1px solid #c3c3c3;
  color: #111;
}
.infobar p {
  flex: 1;
  margin: 0 0 0 7px;
}
.action {
  height: 34px;
  padding: 0 16px;
  margin-right: 6px;
  background: #fff;
  border: 1px solid #c6c6c6;
  border-radius: 6px;
  color: #3d3d3d;
}

/* spreadsheet */
.sheet {
  flex: 1;
  min-height: 0;
  display: flex;
}
.grid-view {
  flex: 1;
  min-width: 0;
  overflow: hidden;
  background: #fff;
}
#grid {
  table-layout: fixed;
  width: 1809px;
  border-spacing: 0;
  border-collapse: separate;
}
#grid th, #grid td {
  width: 104px;
  height: 18px;
  padding: 0;
  line-height: 17px;
  border: solid #c0c0c0;
  border-width: 0 1px 1px 0;
}
#grid th {
  background: #fafafa;
  border-color: #9b9b9b;
  font-weight: normal;
}
#grid th:first-child {
  width: 41px;
}
#grid thead th {
  height: 20px;
  padding-left: 2px;
}
#grid .tall th, #grid .tall td {
  height: 21px;
}
#grid th.current {
  background: #e95420;
  border-color: #c8451a;
  color: #fff;
  font-weight: bold;
}
#grid td {
  padding-left: 1px;
  font-family: "Liberation Sans", sans-serif;
  font-size: 15px;
  color: #000;
  vertical-align: bottom;
}
#grid td.right {
  padding: 0 1px 0 0;
  text-align: right;
}
#grid td.current {
  position: relative;
}
#grid td.current::before {
  content: "";
  position: absolute;
  inset: -1px;
  border: 2px solid #e95420;
}
#grid td.current::after {
  content: "";
  position: absolute;
  right: -3px;
  bottom: -3px;
  width: 5px;
  height: 5px;
  background: #e95420;
}
.cursor {
  position: absolute;
  left: 45px;
  top: 12px;
  z-index: 1;
}
.vscroll {
  width: 12px;
  display: flex;
  flex-direction: column;
  align-items: center;
}
.split-grip {
  display: flex;
  align-items: center;
  justify-content: center;
  background: #b5b5b5;
}
.split-grip::before {
  content: "";
  background: #000;
}
.vscroll .split-grip {
  width: 12px;
  height: 5px;
}
.vscroll .split-grip::before {
  width: 6px;
  height: 1px;
}
.thumb {
  background: #878787;
  border-radius: 3px;
}
.vscroll .thumb {
  width: 6px;
  height: calc(48% - 4px);
  margin-top: 5px;
}
.hscroll {
  display: flex;
  align-items: center;
  justify-content: space-between;
  height: 12px;
  flex: none;
  padding: 0 12px 0 4px;
}
.hscroll .thumb {
  width: calc(47% - 6px);
  height: 6px;
}
.hscroll .split-grip {
  width: 5px;
  height: 12px;
}
.hscroll .split-grip::before {
  width: 1px;
  height: 6px;
}
.tabs {
  display: flex;
  align-items: center;
  height: 25px;
  flex: none;
  padding-left: 9px;
  gap: 7px;
}
.tabs svg {
  width: 18px;
  height: 18px;
}
.tabs .add {
  margin-left: 6px;
}
.tabs .tab {
  align-self: stretch;
  width: 65px;
  margin-left: 3px;
  background: #fff;
  border-bottom: 3px solid #969696;
  font-size: 13px;
  font-weight: bold;
}

/* sidebar */
.splitter {
  display: flex;
  align-items: center;
  width: 7px;
  border-left: 1px solid #b5b5b5;
}
.splitter button {
  width: 7px;
  height: 73px;
  background: #8c8c8c;
}
.splitter button::before {
  content: "";
  display: block;
  margin-left: 1px;
  border: 3px solid transparent;
  border-left: 4px solid #fff;
  border-right: none;
}
.sidebar {
  display: flex;
  flex-direction: column;
  align-items: center;
  gap: 8px;
  width: 52px;
  padding: 3px 4px 0 0;
}
.sidebar button {
  display: flex;
  align-items: center;
  justify-content: center;
  width: 36px;
  height: 34px;
}
.sidebar button:first-child {
  margin-bottom: 3px;
}

/* status bar */
.statusbar {
  display: flex;
  align-items: center;
  height: 21px;
  flex: none;
  border-top: 1px solid #b5b5b5;
  font-size: 12px;
}
.cell {
  display: flex;
  align-items: center;
  justify-content: center;
  height: 14px;
  border-right: 1px solid #dcdcdc;
}
.sheets {
  width: 251px;
  justify-content: flex-start;
  padding-left: 10px;
}
.find {
  width: 348px;
}
.page-style {
  width: 290px;
  justify-content: flex-start;
  padding-left: 8px;
}
.language {
  width: 290px;
}
.insert-mode {
  width: 68px;
}
.small {
  width: 29px;
  padding-left: 3px;
}
.average {
  flex: 1;
}
.zoom {
  width: 143px;
  gap: 6px;
  padding-left: 2px;
}
.zoom input {
  appearance: none;
  width: 97px;
  height: 10px;
}
.zoom input::-webkit-slider-runnable-track {
  height: 2px;
  background: #999;
}
.zoom input::-webkit-slider-thumb {
  appearance: none;
  width: 8px;
  height: 8px;
  margin-top: -3px;
  background: #fff;
  border: 1px solid #555;
  border-radius: 50%;
}
.percent {
  width: 48px;
  border-right: none;
}
```
